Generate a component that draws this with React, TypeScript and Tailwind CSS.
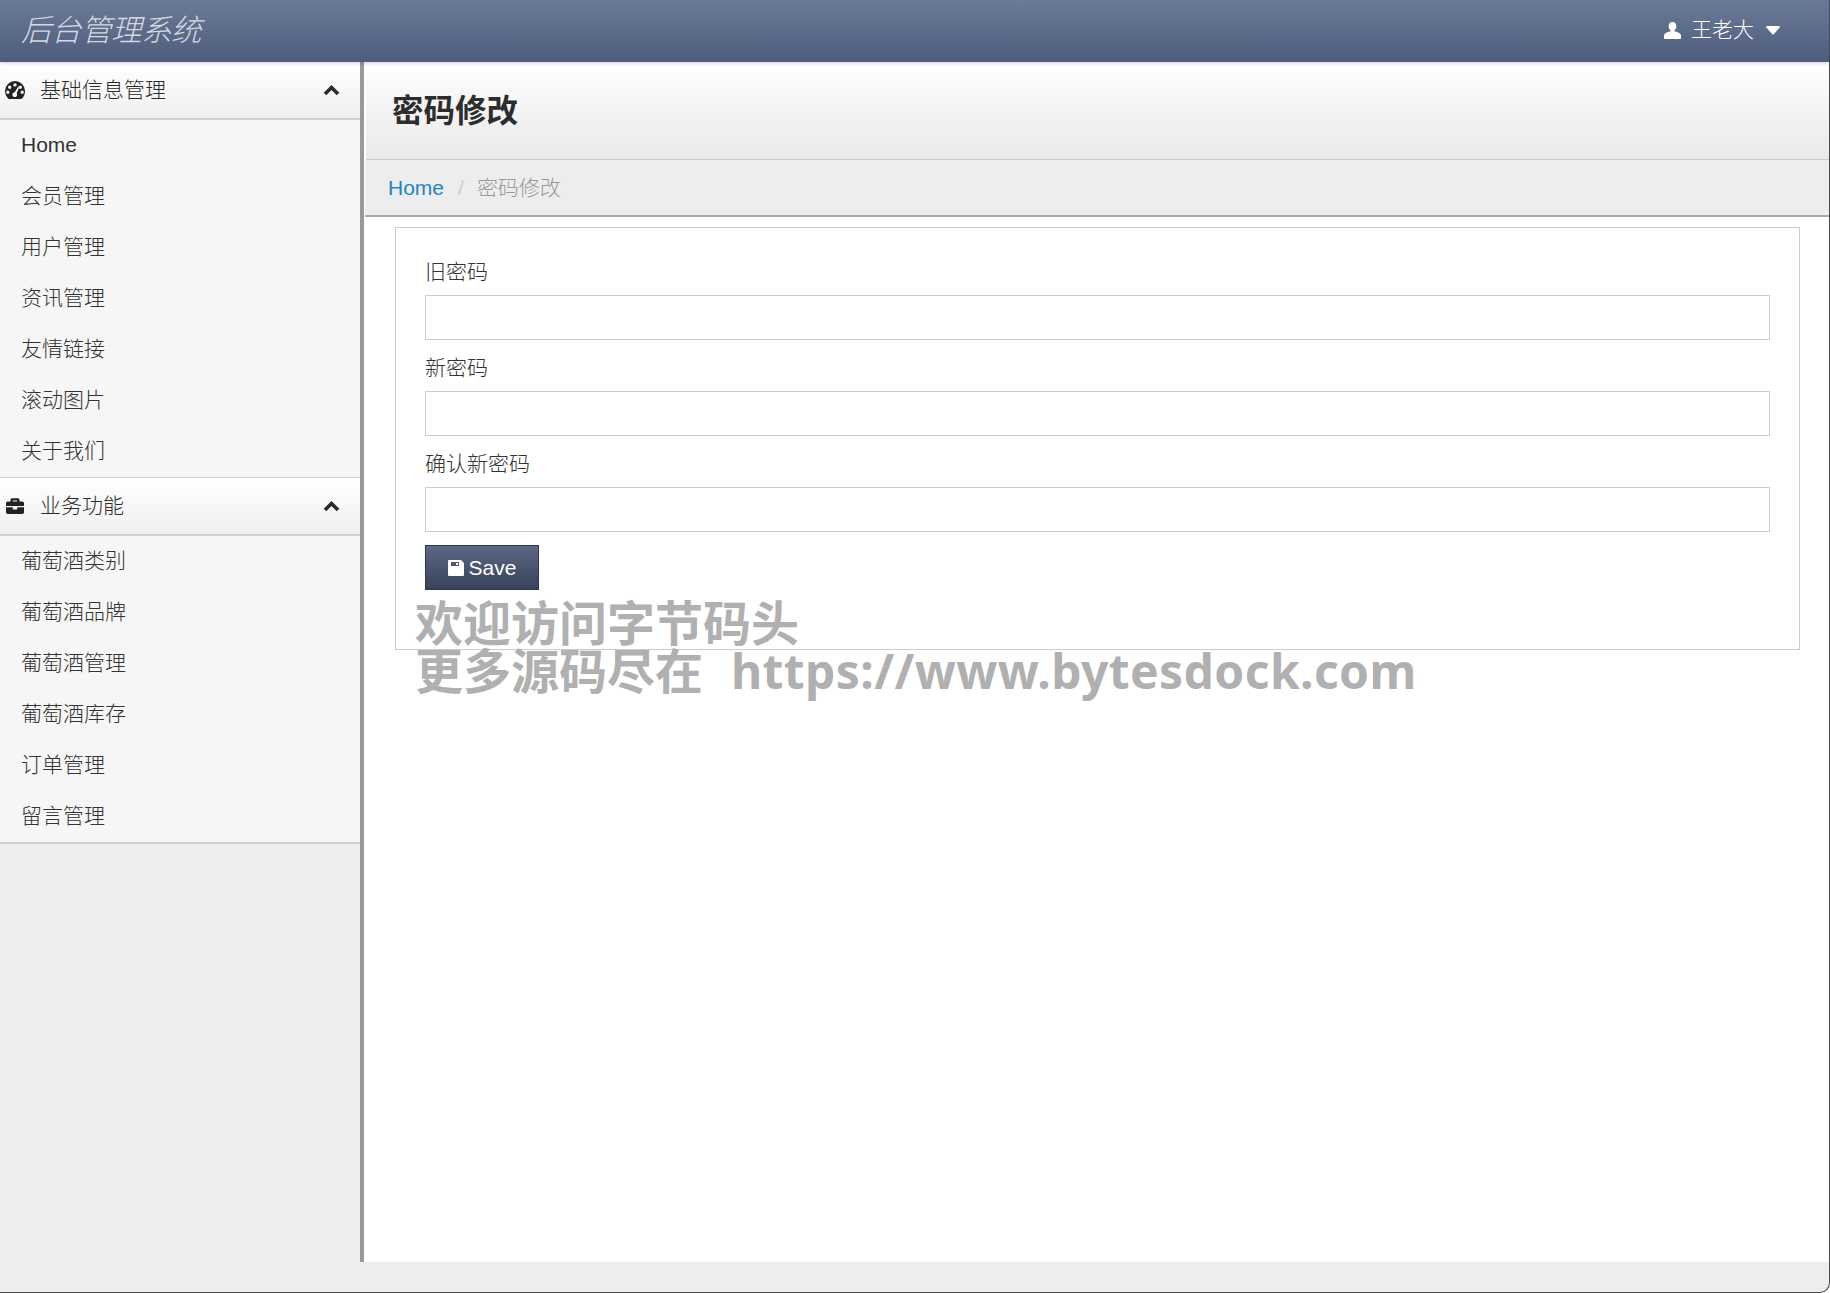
import React from 'react';
import { FaBriefcase } from 'react-icons/fa';

const baseInfoItems = ['Home', '会员管理', '用户管理', '资讯管理', '友情链接', '滚动图片', '关于我们'];
const businessItems = ['葡萄酒类别', '葡萄酒品牌', '葡萄酒管理', '葡萄酒库存', '订单管理', '留言管理'];
const passwordFields = ['旧密码', '新密码', '确认新密码'];

const SaveIcon = () => (
  <svg width="16" height="16" viewBox="0 0 16 16" className="mr-[5px] shrink-0">
    <path fill="#fff" fillRule="evenodd" d="M1 0h12l3 3v12a1 1 0 0 1-1 1H1a1 1 0 0 1-1-1V1a1 1 0 0 1 1-1zM3 2v4h8V2H3z" />
    <rect x="8" y="3" width="2" height="2" fill="#fff" />
  </svg>
);

const DashboardIcon = () => (
  <svg width="20" height="18" viewBox="0 0 20 18">
    <path
      fill="#222"
      fillRule="evenodd"
      d="M10 0a10 10 0 0 1 10 10c0 2.9-1.1 5.6-3 7.6-.3.3-.6.4-1 .4H4c-.4 0-.7-.1-1-.4A10.6 10.6 0 0 1 0 10 10 10 0 0 1 10 0zM10 2.2a1.7 1.7 0 1 0 0 3.4 1.7 1.7 0 0 0 0-3.4zM4.7 4.5a1.7 1.7 0 1 0 0 3.4 1.7 1.7 0 0 0 0-3.4zM15.3 4.5a1.7 1.7 0 1 0 0 3.4 1.7 1.7 0 0 0 0-3.4zM2.8 9.5a1.7 1.7 0 1 0 0 3.4 1.7 1.7 0 0 0 0-3.4zM17.2 9.5a1.7 1.7 0 1 0 0 3.4 1.7 1.7 0 0 0 0-3.4zM13.2 5.6l-3.5 5.7a2.4 2.4 0 1 0 2 1l2.6-6z"
    />
  </svg>
);

const ChevronUp = () => (
  <svg width="17" height="12" viewBox="0 0 17 12">
    <polyline points="2,10 8.5,3.5 15,10" fill="none" stroke="#2b2b2b" strokeWidth="3.6" />
  </svg>
);

const UserIcon = () => (
  <svg width="17" height="17" viewBox="0 0 17 17">
    <path fill="#fff" d="M8.5 0C6 0 4.6 1.8 4.6 4.3c0 1.7.8 3.3 2 4.1v.9C4 9.900 1 10.800 0 13v3.200c0 .5.4.8.8.8h15.400c.4 0 .8-.3.8-.8V13c-1-2.200-4-3.100-6.600-3.700v-.9c1.200-.8 2-2.400 2-4.100C12.400 1.800 11 0 8.500 0z" />
  </svg>
);

const CaretDown = () => (
  <svg width="14" height="9" viewBox="0 0 14 9">
    <path fill="#fff" d="M1 0h12c.8 0 1.200.9.700 1.500L7.700 8.300c-.4.4-1 .4-1.400 0L.3 1.500C-.2.900.200 0 1 0z" />
  </svg>
);

const SidebarGroup = ({ icon, title, items }: { icon: React.ReactNode; title: string; items: string[] }) => (
  <section>
    <div className="h-[58px] flex items-center pl-[5px] pr-[20px] border-b-2 border-[#cfcfcf] bg-gradient-to-b from-white to-[#f0f0f0] text-[#2b2b2b]">
      <span className="w-[20px] flex justify-center">{icon}</span>
      <span className="ml-[15px] flex-1 pb-[1px]">{title}</span>
      <ChevronUp />
    </div>
    <ul className="bg-[#f6f6f6] border-b-2 border-[#cfcfcf] -mb-px">
      {items.map((item) => (
        <li key={item} className="h-[51px] flex items-center pl-[21px] pb-[2px] text-[#333]">
          {item}
        </li>
      ))}
    </ul>
  </section>
);

const App: React.FC = () => {
  return (
    <div className="relative w-[1830px] h-[1293px] overflow-hidden bg-[#ededed] text-[21px] leading-[30px] font-light border-r border-b border-[#4a4a50] rounded-br-[10px] font-['Liberation_Sans','Noto_Sans_CJK_SC',sans-serif]">
      <header className="h-[62px] flex items-center justify-between pl-[21px] pr-[49px] bg-gradient-to-b from-[#6b7a97] to-[#4e5d7d] shadow-[0_1px_4px_rgba(0,0,0,0.2)] relative">
        <span className="text-[30.5px] italic font-light text-[#d4d8e0] tracking-[-0.5px] pb-[2px]">后台管理系统</span>
        <div className="flex items-center text-white pb-[2px]">
          <UserIcon />
          <span className="ml-[10px]">王老大</span>
          <span className="ml-[12px] flex">
            <CaretDown />
          </span>
        </div>
      </header>

      <div className="flex h-[1200px]">
        <aside className="w-[364px] shrink-0 border-r-4 border-[#999]">
          <SidebarGroup icon={<DashboardIcon />} title="基础信息管理" items={baseInfoItems} />
          <SidebarGroup icon={<FaBriefcase className="w-[20px] h-[18px] text-[#222]" />} title="业务功能" items={businessItems} />
        </aside>

        <main className="flex-1 bg-white pl-[2px]">
          <div className="h-[98px] pl-[26px] pt-[27px] bg-gradient-to-b from-white to-[#e9e9e9] border-b border-[#cdcdcd]">
            <h1 className="text-[31.5px] leading-[45px] font-bold text-[#2d2d2d]">密码修改</h1>
          </div>
          <div className="h-[57px] -ml-px flex items-center pl-[23px] bg-[#ededed] border-b-2 border-[#aaa]">
            <span className="text-[#1f85c4]">Home</span>
            <span className="ml-[14px] mr-[13px] text-[#ccc]">/</span>
            <span className="text-[#999]">密码修改</span>
          </div>
          <form className="mx-[29px] mt-[10px] h-[423px] border border-[#ccc] px-[29px] pt-[29px]">
            {passwordFields.map((label) => (
              <div key={label} className="mb-[13px]">
                <label className="block text-[#333] mb-[8px]">{label}</label>
                <input type="password" className="block w-full h-[45px] bg-white border border-[#ccc] outline-none" />
              </div>
            ))}
            <button type="button" className="w-[114px] h-[45px] flex items-center justify-center font-normal bg-gradient-to-b from-[#5b6887] to-[#394259] border border-[#2f3648] text-white">
              <SaveIcon />
              Save
            </button>
          </form>
        </main>
      </div>

      {/* site watermark burned into the screenshot */}
      <div className="absolute left-[415px] top-[599px] text-[48px] leading-[48px] font-bold text-[#b0b0b0] whitespace-pre font-['Noto_Sans','Noto_Sans_CJK_SC',sans-serif]">
        <div>欢迎访问字节码头</div>
        <div>
          更多源码尽在  <span className="ml-[3px] tracking-[0.4px]">https://www.bytesdock.com</span>
        </div>
      </div>
    </div>
  );
};

export default App;
